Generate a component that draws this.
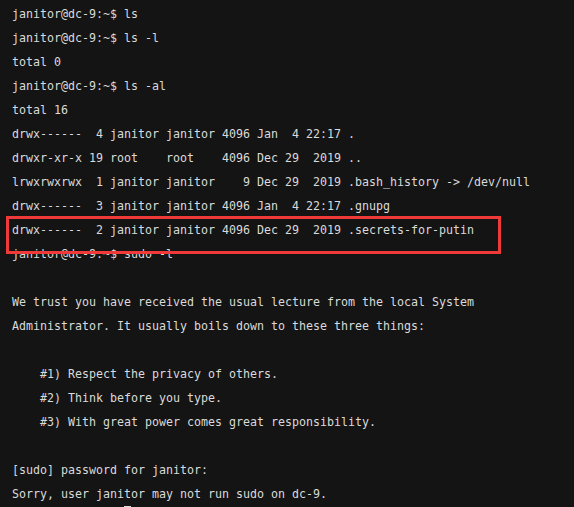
const lines = [
	"janitor@dc-9:~$ ls",
	"janitor@dc-9:~$ ls -l",
	"total 0",
	"janitor@dc-9:~$ ls -al",
	"total 16",
	"drwx------  4 janitor janitor 4096 Jan  4 22:17 .",
	"drwxr-xr-x 19 root    root    4096 Dec 29  2019 ..",
	"lrwxrwxrwx  1 janitor janitor    9 Dec 29  2019 .bash_history -> /dev/null",
	"drwx------  3 janitor janitor 4096 Jan  4 22:17 .gnupg",
	"drwx------  2 janitor janitor 4096 Dec 29  2019 .secrets-for-putin",
	"janitor@dc-9:~$ sudo -l",
	"",
	"We trust you have received the usual lecture from the local System",
	"Administrator. It usually boils down to these three things:",
	"",
	"    #1) Respect the privacy of others.",
	"    #2) Think before you type.",
	"    #3) With great power comes great responsibility.",
	"",
	"[sudo] password for janitor:",
	"Sorry, user janitor may not run sudo on dc-9.",
];

export default function App() {
	return (
		<div className="relative h-[507px] w-[574px] overflow-hidden bg-[#141414]">
			<pre className="pt-[2px] pl-[12px] font-['DejaVu_Sans_Mono',monospace] text-[11.63px] leading-[24px] text-[#dadada]">
				{lines.map((l, i) => (
					<div key={i} className="h-[24px]">{l}</div>
				))}
				{/* cursor on the next prompt, mostly below the fold */}
				<div className="h-[24px] pl-[112px]">
					<span className="block h-[16px] w-[7px] bg-[#dadada]"></span>
				</div>
			</pre>
			{/* highlight box */}
			<div className="absolute left-[6px] top-[216px] h-[38px] w-[495px] border-[3px] border-[#f03a3a]"></div>
		</div>
	);
}
